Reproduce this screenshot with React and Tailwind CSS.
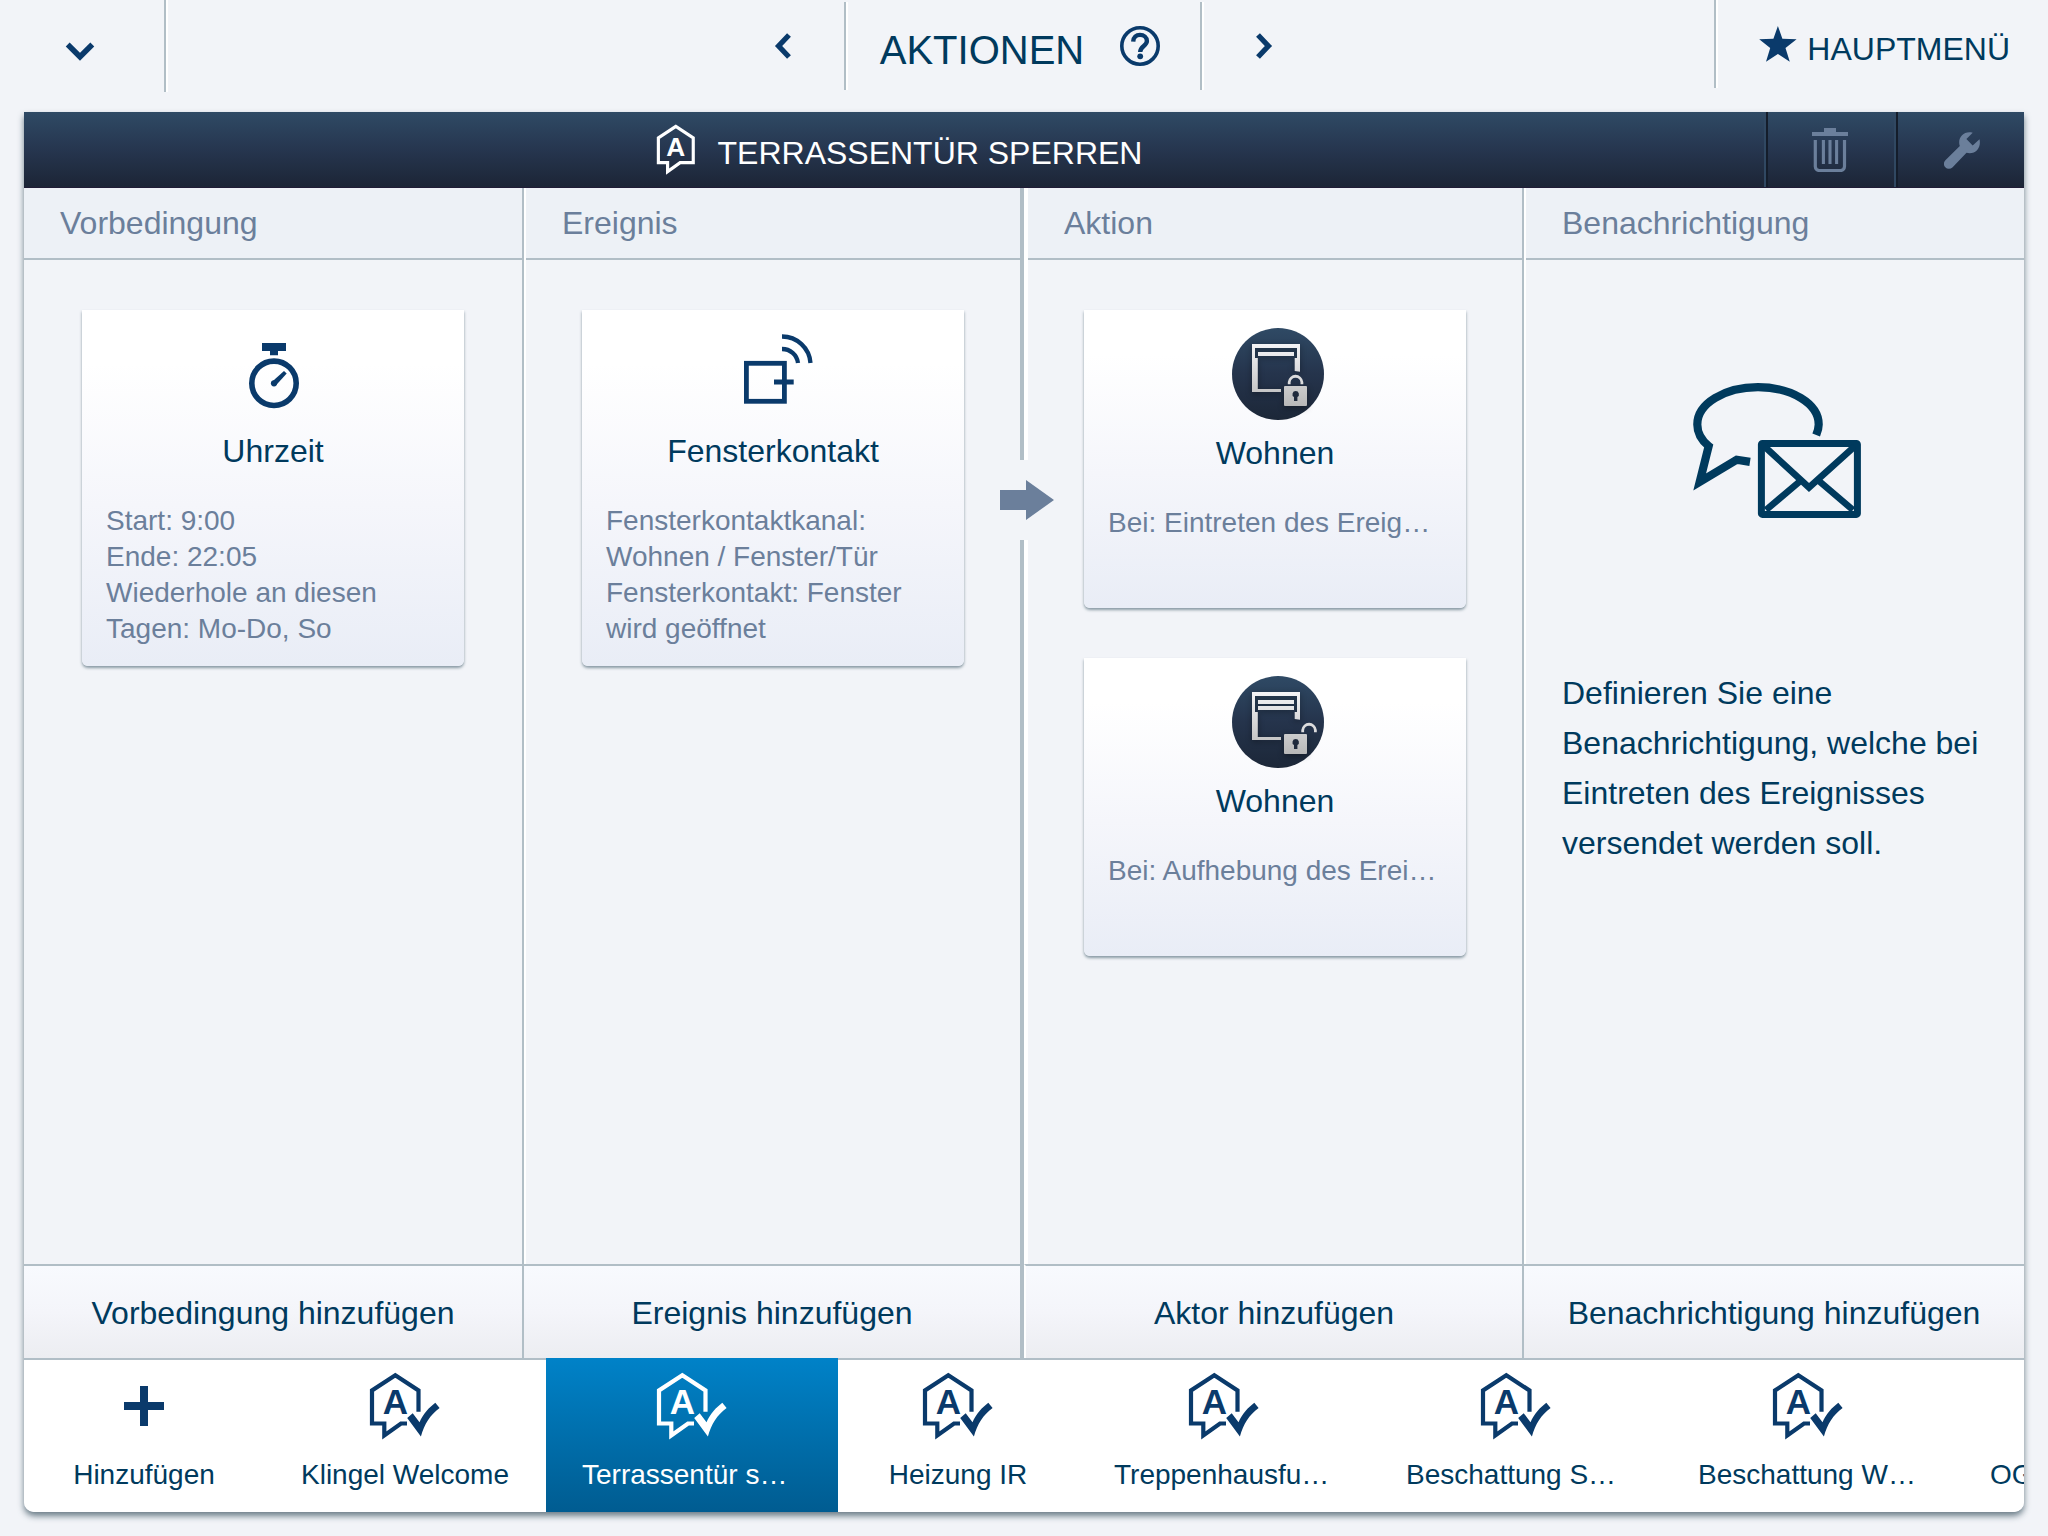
import React from 'react';

const tabs = [
    { id: 'klingel', label: 'Klingel Welcome', width: 'w-[282px]' },
    { id: 'terrasse', label: 'Terrassentür s…', width: 'w-[292px]', cut: true },
    { id: 'heizung', label: 'Heizung IR', width: 'w-[240px]' },
    { id: 'treppenhaus', label: 'Treppenhausfu…', width: 'w-[292px]', cut: true },
    { id: 'beschattung-s', label: 'Beschattung S…', width: 'w-[292px]', cut: true },
    { id: 'beschattung-w', label: 'Beschattung W…', width: 'w-[292px]', cut: true },
    { id: 'og', label: 'OG', width: 'w-[292px]', cut: true }
];

/* Icons */

const HouseIcon = ({ className, checked }) => (
    <svg className={className} viewBox={checked ? '0 0 72 68' : '0 0 53 68'} fill="none" aria-hidden="true">
        {checked ? (
            <>
                <path d="M49.5 39.8V18.5L26.3 3.2 3 18.5v33h12.3v12L32 51.5h6" stroke="currentColor" strokeWidth="4.2" />
                <path d="M38.2 46l5.5-4.8 6.8 9C54 42 60 35.500 66.3 30.700l4.300 5.300C61 43 55.5 52 51.9 64.500Z" fill="currentColor" />
            </>
        ) : (
            <path d="M26.3 3.2 3 18.5v33h12.3v12L32 51.5h17.5v-33Z" stroke="currentColor" strokeWidth="4.2" />
        )}
        <text
            x="26.3"
            y="42"
            textAnchor="middle"
            fill="currentColor"
            className="font-['Liberation_Sans',sans-serif] text-[35px] font-bold"
        >
            A
        </text>
    </svg>
);

const PlusIcon = ({ className }) => (
    <svg className={className} viewBox="0 0 72 68" fill="currentColor" aria-hidden="true">
        <path d="M32 14h8v16h16v8H40v16h-8V38H16v-8h16Z" />
    </svg>
);

const ChevronDown = () => (
    <svg className="w-[30px] h-5" viewBox="0 0 30 20" fill="none" aria-hidden="true">
        <path d="M2.7 2.5 15 14.8 27.3 2.5" stroke="currentColor" strokeWidth="5.5" />
    </svg>
);

const ChevronLeft = () => (
    <svg className="w-[18px] h-7" viewBox="0 0 18 28" fill="none" aria-hidden="true">
        <path d="M15 3 4.6 14 15 25" stroke="currentColor" strokeWidth="5.3" />
    </svg>
);

const ChevronRight = () => (
    <svg className="w-[18px] h-7" viewBox="0 0 18 28" fill="none" aria-hidden="true">
        <path d="M3 3l10.400 11L3 25" stroke="currentColor" strokeWidth="5.3" />
    </svg>
);

const HelpIcon = () => (
    <svg className="w-10 h-10" viewBox="0 0 40 40" fill="none" aria-hidden="true">
        <circle cx="20" cy="20" r="18.2" stroke="currentColor" strokeWidth="3.6" />
        <path d="M13.2 15.6C13.4 11.2 16.2 8.9 20 8.9s6.9 2.4 6.9 6.1c0 5-6.7 5-6.7 11" stroke="currentColor" strokeWidth="4.4" />
        <circle cx="20.2" cy="30.3" r="2.9" fill="currentColor" />
    </svg>
);

const StarIcon = () => (
    <svg className="w-[38px] h-9" viewBox="0 0 38 36" fill="currentColor" aria-hidden="true">
        <path d="M18.9 0l4.5 12.8 14.2.4-11.1 8.8 4.3 13.7-11.9-7.8L7 35.7 11.2 22 .2 13.2l14.2-.4Z" />
    </svg>
);

const TrashIcon = () => (
    <svg className="w-9 h-11" viewBox="0 0 36 44" fill="none" aria-hidden="true">
        <path d="M12 0h12v4h12v4H0V4h12Z" fill="currentColor" />
        <path d="M3.3 12v26.5a4 4 0 0 0 4 4h21.2a4 4 0 0 0 4-4V12" stroke="currentColor" strokeWidth="3.2" />
        <path d="M11.4 12v24M18 12v24M24.6 12v24" stroke="currentColor" strokeWidth="3.1" />
    </svg>
);

const WrenchIcon = () => (
    <svg className="w-[37px] h-[37px]" viewBox="0 0 37 37" fill="currentColor" aria-hidden="true">
        <path d="M28.7.8C20-1.8 13 6 15.8 14L1.4 28.2a4.9 4.9 0 0 0 7 7.2L22.5 20.8C31.5 23 37.5 15.5 35.5 7.2L28.7 13.4 22.4 7Z" />
    </svg>
);

const StopwatchIcon = () => (
    <svg className="w-[100px] h-[121px]" viewBox="0 0 100 121" fill="none" aria-hidden="true">
        <path d="M39 33h24v8h-8v4.3h-8V41h-8Z" fill="currentColor" />
        <circle cx="51" cy="73.3" r="22.2" stroke="currentColor" strokeWidth="5.6" />
        <circle cx="51" cy="73.3" r="3.1" fill="currentColor" />
        <path d="M49.3 71.4 61 60.9l2.7 2.6L53 75.3Z" fill="currentColor" />
    </svg>
);

const WindowContactIcon = () => (
    <svg className="w-[100px] h-[121px]" viewBox="0 0 100 121" fill="none" stroke="currentColor" aria-hidden="true">
        <rect x="23.4" y="53.3" width="38" height="38" strokeWidth="4.8" />
        <path d="M51 72h19.7" strokeWidth="5" />
        <path d="M59 26.5A28.5 28.5 0 0 1 87.500 53" strokeWidth="4.3" />
        <path d="M59 39A16 16 0 0 1 75 53" strokeWidth="4.3" />
    </svg>
);

const BlindIcon = ({ locked }) => {
    const id = locked ? 'locked' : 'unlocked';
    return (
        <svg className="w-[98px] h-[123px]" viewBox="0 0 98 123" fill="none" aria-hidden="true">
            <defs>
                <linearGradient id={`${id}-disc`} x1="0" y1="0" x2="0" y2="1">
                    <stop offset="0" stopColor="#2f4a65" />
                    <stop offset="0.5" stopColor="#25344c" />
                    <stop offset="1" stopColor="#1c2738" />
                </linearGradient>
                <linearGradient id={`${id}-metal`} gradientUnits="userSpaceOnUse" x1="0" y1="34" x2="0" y2="96">
                    <stop offset="0" stopColor="#f4f4f6" />
                    <stop offset="1" stopColor="#b8b8b8" />
                </linearGradient>
            </defs>
            <circle cx="52" cy="64" r="46" fill={`url(#${id}-disc)`} />
            <g fill={`url(#${id}-metal)`} className="drop-shadow-[0_2px_3px_rgba(0,0,0,0.35)]">
                {locked ? (
                    <>
                        <path d="M26 34h48v27.7l-5.3-.7V48h2.300V38H29v10h2.8v31H55v3H26Z" />
                        <path d="M32 42h36v4H32Z" />
                    </>
                ) : (
                    <>
                        <path d="M26 34h48v27.7l-5.3-.7V54h2.300V38H29v16h2.8v25H55v3H26Z" />
                        <path d="M32 42h36v4H32ZM32 48h36v4H32Z" />
                    </>
                )}
                <rect x="58" y="76" width="23" height="20" rx="1" />
            </g>
            <path
                d={locked ? 'M63.2 74.3v-2.2a6.4 6.7 0 0 1 12.7 0v2.2' : 'M76.7 74.3v-2.2a6.4 6.7 0 0 1 12.7 0v2.2'}
                stroke="#dcdcdd"
                strokeWidth="2.8"
            />
            <path d="M69.7 81a3.3 3.3 0 0 1 1.7 6.1V91h-3.4v-3.9A3.3 3.3 0 0 1 69.7 81Z" fill="#1f2a3c" />
        </svg>
    );
};

const MessageIcon = () => (
    <svg className="w-[172px] h-[140px]" viewBox="0 0 172 140" fill="none" stroke="currentColor" aria-hidden="true">
        <path
            d="M127.2 55C129 50.5 129.7 47.5 129.7 44.4 129.7 23.7 102.5 7.2 69 7.2S8.3 23.7 8.3 44.4C8.3 52.5 12.3 60 19.7 66.1L10.7 101.9 47.7 79.8 61 81.9"
            strokeWidth="8.2"
            strokeMiterlimit="8"
        />
        <rect x="72.4" y="63.4" width="96" height="71" rx="1" strokeWidth="7" />
        <path d="M75.5 66.5 120 107.5 165.5 66.5M111 101.2 77 130M130.3 101.2 164 130" strokeWidth="6.6" />
    </svg>
);

/* Building blocks */

const Card = ({ icon, title, children }) => (
    <article className="mx-auto flex min-h-[298px] w-full max-w-[382px] flex-col items-center rounded-b-md bg-linear-to-b from-white from-15% via-[#f5f6fb] via-55% to-[#e9edf6] px-6 pb-[19px] shadow-[0_2px_3px_rgba(80,104,118,0.65)]">
        <div className="text-[#0a3a6b]">{icon}</div>
        <h3 className="text-[32px] leading-10">{title}</h3>
        <div className="mt-8 w-full text-[28px] leading-9 text-[#6b7f9b]">{children}</div>
    </article>
);

const Column = ({ title, action, edge, inner, footer = '', children }) => (
    <section className={`flex min-w-0 flex-col border-[#b1bec6] ${edge}`}>
        <div className={`flex flex-1 flex-col border-white ${inner}`}>
            <h2 className="border-b-2 border-[#b1bec6] bg-[#edf1f6] px-9 py-[15px] text-[32px] leading-10 text-[#6b7f9b]">
                {title}
            </h2>
            {children}
        </div>
        <button
            type="button"
            className={`h-[94px] border-t-2 border-t-[#b1bec6] bg-linear-to-b from-[#f8fafe] via-[#f4f5fa] to-[#ecedf1] pt-0.5 text-[32px] ${footer}`}
        >
            {action}
        </button>
    </section>
);

const TopBar = () => (
    <header className="grid h-28 grid-cols-[1fr_auto_1fr] items-start text-[#0a3a6b]">
        <button
            type="button"
            aria-label="Öffnen"
            className="flex h-[92px] w-[166px] items-center justify-center border-r-2 border-[#b1bec6] pt-3 pr-1 shadow-[2px_0_0_#fff]"
        >
            <ChevronDown />
        </button>

        <nav className="flex items-start">
            <button type="button" aria-label="Zurück" className="flex h-[92px] w-[122px] items-center justify-center">
                <ChevronLeft />
            </button>
            <div className="mt-0.5 flex h-[88px] items-start gap-9 border-x-2 border-[#b1bec6] pt-6 pr-10 pl-[34px] shadow-[2px_0_0_#fff,inset_2px_0_0_#fff]">
                <h1 className="text-[40px] leading-[48px] text-[#003a5d]">AKTIONEN</h1>
                <button type="button" aria-label="Hilfe">
                    <HelpIcon />
                </button>
            </div>
            <button type="button" aria-label="Weiter" className="flex h-[92px] w-[124px] items-center justify-center">
                <ChevronRight />
            </button>
        </nav>

        <a
            href="#hauptmenue"
            className="flex h-[88px] items-start gap-2.5 justify-self-end border-l-2 border-[#b1bec6] pt-[26px] pr-[38px] pl-[43px] shadow-[inset_2px_0_0_#fff]"
        >
            <StarIcon />
            <span className="text-[32px] leading-[46px] text-[#003a5d]">HAUPTMENÜ</span>
        </a>
    </header>
);

const TabBar = ({ active, onSelect }) => (
    <nav className="flex overflow-hidden bg-white text-[28px] leading-[38px]">
        <button type="button" className="flex h-[154px] w-[240px] shrink-0 flex-col items-center border-t-2 border-[#b1bec6] pt-3">
            <PlusIcon className="h-[68px] w-[72px] text-[#0a3a6b]" />
            <span className="mt-4">Hinzufügen</span>
        </button>
        {tabs.map((tab) => {
            const isActive = tab.id === active;
            return (
                <button
                    key={tab.id}
                    type="button"
                    onClick={() => onSelect(tab.id)}
                    className={`flex h-[154px] shrink-0 flex-col items-center px-9 ${tab.width} ${
                        isActive
                            ? 'bg-linear-to-b from-[#0082c8] to-[#005c91] pt-3.5 text-white'
                            : 'border-t-2 border-[#b1bec6] pt-3'
                    }`}
                >
                    <HouseIcon checked className={`h-[68px] w-[72px] ${isActive ? 'text-white' : 'text-[#0a3a6b]'}`} />
                    <span className={`mt-4 whitespace-nowrap ${tab.cut ? 'w-full text-left' : ''}`}>{tab.label}</span>
                </button>
            );
        })}
    </nav>
);

const App = () => {
    const [active, setActive] = React.useState('terrasse');

    return (
        <div className="flex min-h-screen flex-col bg-[#f2f4f8] font-['Liberation_Sans',Arial,sans-serif] text-[#003a5d]">
            <TopBar />

            <main className="mx-6 mb-6 flex flex-1 flex-col overflow-hidden rounded-b-[10px] shadow-[0_4px_6px_rgba(84,104,116,0.85)]">
                {/* Title bar */}
                <div className="flex h-[76px] border-b border-[#201c36] bg-linear-to-b from-[#2f4a65] via-[#26364f] to-[#1c2536] text-white">
                    <div className="flex flex-1 items-center justify-center gap-[22px] pl-2.5">
                        <HouseIcon className="h-[51px] w-10" />
                        <span className="pt-1.5 text-[32px] leading-10">TERRASSENTÜR SPERREN</span>
                    </div>
                    <button
                        type="button"
                        aria-label="Löschen"
                        className="flex w-[130px] items-center justify-center border-l-2 border-[#304862] text-[#6b7f9b] shadow-[inset_2px_0_0_#141d2b]"
                    >
                        <TrashIcon />
                    </button>
                    <button
                        type="button"
                        aria-label="Einstellungen"
                        className="flex w-[130px] items-center justify-center border-l-2 border-[#304862] pt-0.5 pl-1 text-[#6b7f9b] shadow-[inset_2px_0_0_#141d2b]"
                    >
                        <WrenchIcon />
                    </button>
                </div>

                {/* Columns */}
                <div className="relative grid flex-1 grid-cols-4">
                    <Column title="Vorbedingung" action="Vorbedingung hinzufügen" edge="border-r-2" inner="">
                        <div className="px-14 pt-[50px]">
                            <Card icon={<StopwatchIcon />} title="Uhrzeit">
                                <p>Start: 9:00</p>
                                <p>Ende: 22:05</p>
                                <p>Wiederhole an diesen Tagen: Mo-Do, So</p>
                            </Card>
                        </div>
                    </Column>

                    <Column title="Ereignis" action="Ereignis hinzufügen" edge="border-r-4" inner="border-l-2">
                        <div className="px-14 pt-[50px]">
                            <Card icon={<WindowContactIcon />} title="Fensterkontakt">
                                <p>Fensterkontaktkanal: Wohnen / Fenster/Tür</p>
                                <p>Fensterkontakt: Fenster wird geöffnet</p>
                            </Card>
                        </div>
                    </Column>

                    <Column
                        title="Aktion"
                        action="Aktor hinzufügen"
                        edge="border-r-2"
                        inner="border-l-4"
                        footer="border-l-2 border-l-white"
                    >
                        <div className="flex flex-col gap-[50px] px-14 pt-[50px]">
                            <Card icon={<BlindIcon locked />} title="Wohnen">
                                <p className="whitespace-nowrap">Bei: Eintreten des Ereig…</p>
                            </Card>
                            <Card icon={<BlindIcon />} title="Wohnen">
                                <p className="whitespace-nowrap">Bei: Aufhebung des Erei…</p>
                            </Card>
                        </div>
                    </Column>

                    <Column title="Benachrichtigung" action="Benachrichtigung hinzufügen" edge="" inner="border-l-2">
                        <div className="flex flex-col items-center px-9 pt-30">
                            <MessageIcon />
                            <p className="mt-37 w-full text-[32px] leading-[50px]">
                                Definieren Sie eine Benachrichtigung, welche bei Eintreten des Ereignisses versendet werden soll.
                            </p>
                        </div>
                    </Column>

                    {/* Arrow from event to action */}
                    <div className="absolute top-[272px] left-1/2 -ml-6 flex h-20 items-center bg-[#f2f4f8]">
                        <svg className="h-10 w-[54px]" viewBox="0 0 54 40" fill="#6b7f9b" aria-hidden="true">
                            <path d="M0 10h26V0l28 20-28 20V30H0Z" />
                        </svg>
                    </div>
                </div>

                <TabBar active={active} onSelect={setActive} />
            </main>
        </div>
    );
};

export default App;
